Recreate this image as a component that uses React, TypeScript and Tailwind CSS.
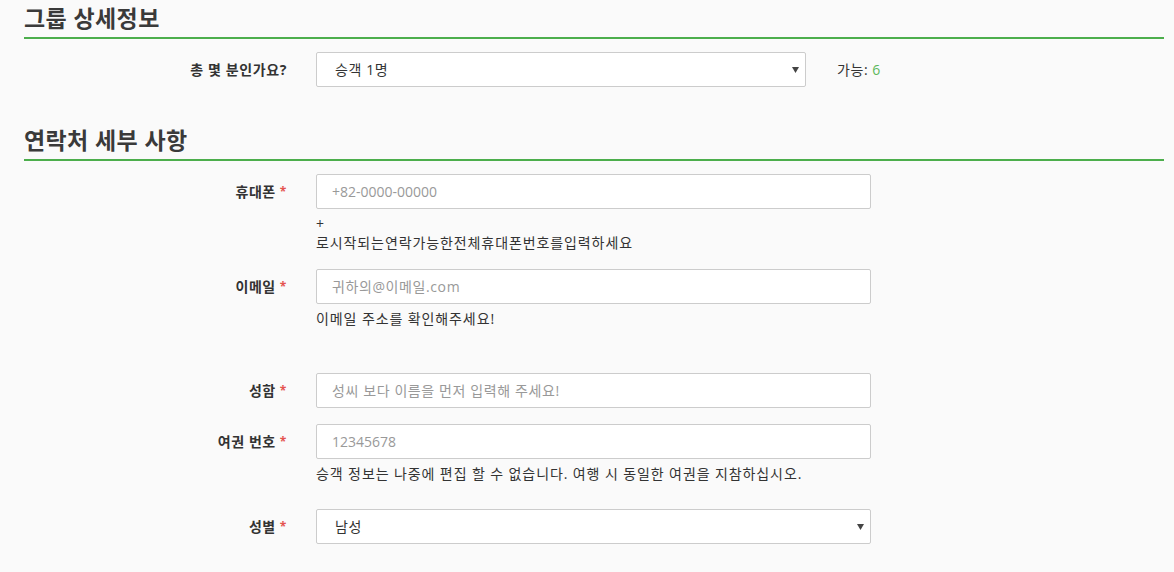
const font = "font-['Open_Sans','Noto_Sans_CJK_KR',sans-serif]";

const Label = ({ text, required = true }: { text: string; required?: boolean }) => (
  <div className="w-[263px] h-[35px] flex items-center justify-end text-[14px] font-bold text-[#333] tracking-[0.6px] shrink-0">
    {text}
    {required && <span className="text-[#e4534f] text-[12px] ml-[4px]">*</span>}
  </div>
);

const TextInput = ({ placeholder, latin = false }: { placeholder: string; latin?: boolean }) => (
  <div
    className={`w-[555px] h-[35px] bg-white border border-[#ccc] rounded-[2px] flex items-center pl-[15px] text-[14px] text-[#999] ${latin ? "tracking-normal" : "tracking-[0.6px]"}`}
  >
    {placeholder}
  </div>
);

const Arrow = () => (
  <svg width="7" height="6" viewBox="0 0 7 6">
    <path d="M0 0 H7 L3.5 6 Z" fill="#444" />
  </svg>
);

const SelectBox = ({ value, width }: { value: string; width: string }) => (
  <div
    className={`${width} h-[35px] bg-white border border-[#ccc] rounded-[2px] flex items-center justify-between pl-[18px] pr-[6px] text-[14px] text-[#333] tracking-[0.6px]`}
  >
    <span>{value}</span>
    <Arrow />
  </div>
);

const Help = ({ children }: { children: React.ReactNode }) => (
  <div className="mt-[5px] text-[14px] leading-[19px] text-[#333] tracking-[0.9px]">{children}</div>
);

const SectionTitle = ({ title }: { title: string }) => (
  <div className="border-b-2 border-[#4cae4c] pt-[4px] pb-[5px]">
    <h2 className="text-[23px] leading-[28px] font-bold text-[#3a3a3a] tracking-[0.4px]">{title}</h2>
  </div>
);

const Gap = () => <div className="w-[29px] shrink-0" />;

export default function App() {
  return (
    <div className={`${font} bg-[#fafafa] min-h-[572px] pl-[24px] pr-[10px]`}>
      <SectionTitle title="그룹 상세정보" />

      <div className="flex items-start mt-[13px]">
        <Label text="총 몇 분인가요?" required={false} />
        <Gap />
        <SelectBox value="승객 1명" width="w-[490px]" />
        <div className="h-[35px] flex items-center ml-[31px] text-[14px] text-[#333] tracking-[0.6px]">
          가능: <span className="text-[#5cb85c] ml-[4px]">6</span>
        </div>
      </div>

      <div className="mt-[35px]">
        <SectionTitle title="연락처 세부 사항" />
      </div>

      <div className="flex items-start mt-[13px]">
        <Label text="휴대폰" />
        <Gap />
        <div>
          <TextInput placeholder="+82-0000-00000" latin />
          <Help>
            +
            <br />
            로시작되는연락가능한전체휴대폰번호를입력하세요
          </Help>
        </div>
      </div>

      <div className="flex items-start mt-[17px]">
        <Label text="이메일" />
        <Gap />
        <div>
          <TextInput placeholder="귀하의@이메일.com" />
          <Help>이메일 주소를 확인해주세요!</Help>
        </div>
      </div>

      <div className="flex items-start mt-[45px]">
        <Label text="성함" />
        <Gap />
        <TextInput placeholder="성씨 보다 이름을 먼저 입력해 주세요!" />
      </div>

      <div className="flex items-start mt-[16px]">
        <Label text="여권 번호" />
        <Gap />
        <div>
          <TextInput placeholder="12345678" latin />
          <Help>승객 정보는 나중에 편집 할 수 없습니다. 여행 시 동일한 여권을 지참하십시오.</Help>
        </div>
      </div>

      <div className="flex items-start mt-[26px]">
        <Label text="성별" />
        <Gap />
        <SelectBox value="남성" width="w-[555px]" />
      </div>
    </div>
  );
}
